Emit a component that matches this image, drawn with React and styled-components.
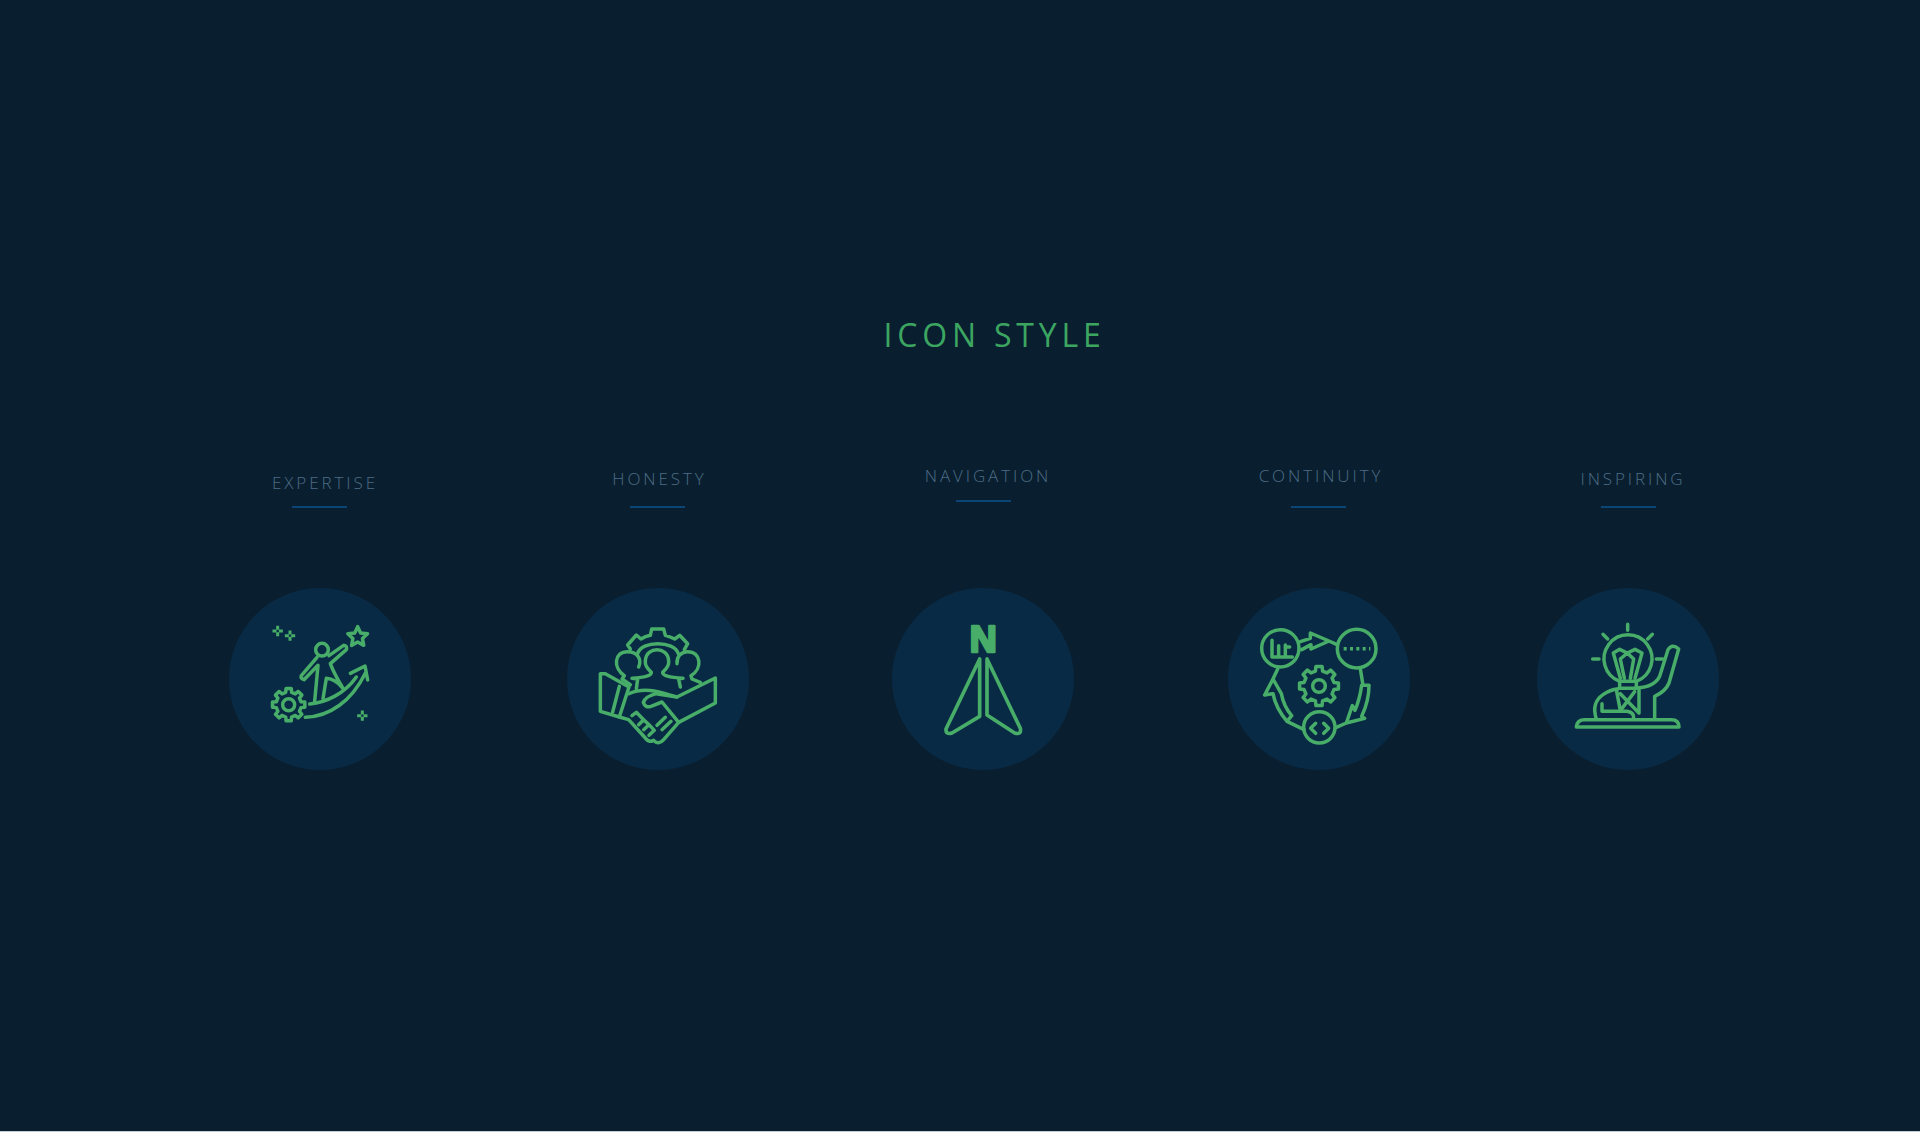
import React from 'react';
import styled, { createGlobalStyle } from 'styled-components';

const GlobalStyle = createGlobalStyle`
  html, body {
    margin: 0;
    padding: 0;
    background: #091f30;
  }
`;

// builds a cog outline around a centre point
const gearPath = (cx, cy, outer, inner, teeth) => {
  const step = (Math.PI * 2) / teeth;
  const pts = [];
  for (let i = 0; i < teeth; i++) {
    const a = i * step - Math.PI / 2;
    const w = step * 0.2;
    const pt = (r, ang) =>
      `${(cx + r * Math.cos(ang)).toFixed(1)} ${(cy + r * Math.sin(ang)).toFixed(1)}`;
    pts.push(pt(outer, a - w), pt(outer, a + w), pt(inner, a + w * 1.5), pt(inner, a + step - w * 1.5));
  }
  return `M${pts.join('L')}Z`;
};

const starPath = (cx, cy, outer, inner) => {
  const pts = [];
  for (let i = 0; i < 10; i++) {
    const r = i % 2 ? inner : outer;
    const a = (i * Math.PI) / 5 - Math.PI / 2;
    pts.push(`${(cx + r * Math.cos(a)).toFixed(1)} ${(cy + r * Math.sin(a)).toFixed(1)}`);
  }
  return `M${pts.join('L')}Z`;
};

const Sparkle = ({ x, y }) => (
  <path
    d={`M${x} ${y - 11}v3M${x} ${y + 8}v3M${x - 11} ${y}h3M${x + 8} ${y}h3`}
    strokeWidth="9"
    strokeLinecap="square"
  />
);

const IconSvg = ({ ox, children }) => (
  <Glyph viewBox="0 0 546 546">
    <g transform={`translate(${-ox},-55)`}>{children}</g>
  </Glyph>
);

const ExpertiseIcon = () => (
  <IconSvg ox={58}>
    <Sparkle x={204} y={184} />
    <Sparkle x={241} y={198} />
    <Sparkle x={458} y={438} />
    <path d={starPath(444, 202, 31, 15)} />
    <circle cx="337" cy="240" r="19" />
    <path d="M322 263L275 318Q271 326 283 330L325 287L315 395M340 387L350 326Q378 328 400 356Q372 310 362 282L410 240Q414 228 402 227L358 258" />
    <path d="M287 443C360 440 425 395 466 312M422 311L466 289L474 331" />
    <path d="M300 403C350 398 405 372 440 322" />
    <path d={gearPath(237, 405, 49, 38, 8)} />
    <circle cx="237" cy="405" r="18" />
  </IconSvg>
);

const HonestyIcon = () => (
  <IconSvg ox={50}>
    <path d="M240 238L232 226L258 196L272 208Q285 200 300 197L304 178H340L345 197Q360 201 373 208L388 197L412 222L402 240" />
    <path d="M262 252C272 212 372 212 384 252" />
    <path d="M258 358L262 328L245 326Q305 322 303 308Q283 290 285 275C285 250 305 240 320 240C335 240 355 250 355 275Q357 290 337 308Q335 322 398 326L385 328L390 352" />
    <path d="M240 345L215 328L222 318C188 296 190 246 232 246C262 246 275 270 265 292" />
    <path d="M450 338L425 328L422 318C458 296 452 246 412 246C392 246 378 262 380 282" />
    <path d="M150 312H165L236 352L207 442L150 425ZM207 350L187 427" />
    <path d="M236 372C285 350 330 368 380 382L495 325V400L385 458" />
    <path d="M380 382L318 372Q285 380 279 398Q285 416 302 410L335 397L385 458L340 510Q325 528 310 512Q295 520 285 505L235 450L207 442" />
    <path d="M245 438L258 428L280 450L265 465M280 450L296 465L280 480M296 465L312 482L296 497M320 467L345 443M335 480L362 455" />
  </IconSvg>
);

const NavigationIcon = () => (
  <IconSvg ox={35}>
    <NorthMark x="308.5" y="246" textAnchor="middle">N</NorthMark>
    <path d="M298 268V440L215 490Q196 496 197 478Z" strokeWidth="11" />
    <path d="M320 268V436L403 490Q424 496 420 476Z" strokeWidth="11" />
  </IconSvg>
);

const ContinuityIcon = () => (
  <IconSvg ox={55}>
    <circle cx="212" cy="236" r="56" />
    <circle cx="441" cy="237" r="58" />
    <circle cx="329" cy="473" r="47" />
    <path d={gearPath(328, 349, 59, 46, 8)} />
    <circle cx="328" cy="349" r="19" />
    <path d="M187 212V262H248M207 228V262M227 226V262M227 232H240" />
    <path d="M402 237H482" strokeDasharray="9 10" strokeLinecap="butt" />
    <path d="M318 461L303 476L318 491M342 461L357 476L342 491" />
    <path d="M272 216L302 206V190L358 214L304 238V225L276 240M358 214L382 225" />
    <path d="M452 297L460 347H478C478 385 468 415 456 440L465 446L410 460L428 408L436 422Q450 390 456 347M410 460L380 473" />
    <path d="M204 298L190 328L165 376L190 372Q198 415 232 455L246 438Q222 410 215 372L190 328M232 455L283 480" />
  </IconSvg>
);

const InspiringIcon = () => (
  <IconSvg ox={52}>
    <path d="M300 335A72 72 0 1 1 350 335V356H300ZM300 335H350" />
    <path d="M302 326L281 250L300 239L323 250L346 239L367 250L346 326M314 326L302 268L323 250L342 268L332 326" />
    <path d="M324 164V182M250 194L264 208M398 194L384 208M219 268H238M410 268H429" />
    <path d="M170 472Q172 450 195 450H455Q478 450 478 472Z" />
    <path d="M230 448Q214 400 250 375Q270 360 296 357" />
    <path d="M247 402V425H322Q344 428 342 448" />
    <path d="M290 360L302 423L345 366M302 372L358 430V358" />
    <path d="M352 355Q405 352 420 320L445 240Q458 220 477 238L448 340Q438 365 405 380V448" />
  </IconSvg>
);

const items = [
  { name: 'EXPERTISE', Icon: ExpertiseIcon, offset: 10, left: 0, labelGap: 12, lift: 0 },
  { name: 'HONESTY', Icon: HonestyIcon, offset: 3, left: 156, labelGap: 16, lift: 0 },
  { name: 'NAVIGATION', Icon: NavigationIcon, offset: 10, left: 143, labelGap: 13.5, lift: 6 },
  { name: 'CONTINUITY', Icon: ContinuityIcon, offset: 4, left: 154, labelGap: 19.5, lift: 0 },
  { name: 'INSPIRING', Icon: InspiringIcon, offset: 10, left: 127, labelGap: 16, lift: 0 },
];

const App = () => {
  return (
    <Page>
      <GlobalStyle />
      <Title>ICON STYLE</Title>
      <Row>
        {items.map(({ name, Icon, offset, left, labelGap, lift }) => (
          <Item key={name} $left={left}>
            <LabelBox>
              <Label $offset={offset} $gap={labelGap}>
                {name}
              </Label>
              <Rule $lift={lift} />
            </LabelBox>
            <Disc>
              <Icon />
            </Disc>
          </Item>
        ))}
      </Row>
    </Page>
  );
};

const Page = styled.div`
  box-sizing: border-box;
  height: 1132px;
  overflow: hidden;
  background: #091f30;
  border-bottom: 1px solid #c3ccd2;
  font-family: 'Open Sans', 'Liberation Sans', sans-serif;
`;

const Title = styled.h1`
  margin: 0;
  padding: 313px 0 0 0;
  width: 1989px;
  text-align: center;
  font-size: 32px;
  line-height: 44px;
  font-weight: 400;
  letter-spacing: 4.8px;
  color: #3ca661;
`;

const Row = styled.div`
  display: flex;
  padding: 0 0 0 229px;
  margin-top: 20px;
`;

const Item = styled.div`
  flex: 0 0 182px;
  width: 182px;
  margin-left: ${(p) => p.$left}px;
  display: flex;
  flex-direction: column;
  align-items: center;
`;

const LabelBox = styled.div`
  display: flex;
  flex-direction: column;
  align-items: center;
  justify-content: flex-end;
  height: 131px;
`;

const Label = styled.div`
  font-size: 17px;
  line-height: 22px;
  font-weight: 300;
  letter-spacing: 2.9px;
  white-space: nowrap;
  color: #4d6c85;
  margin-left: ${(p) => p.$offset}px;
  margin-bottom: ${(p) => p.$gap}px;
`;

const Rule = styled.div`
  flex: none;
  width: 55px;
  height: 2px;
  background: #0b4575;
  margin-bottom: ${(p) => p.$lift}px;
`;

const Disc = styled.div`
  width: 182px;
  height: 182px;
  margin-top: 80px;
  border-radius: 50%;
  background: #092a45;
`;

const Glyph = styled.svg`
  display: block;
  width: 182px;
  height: 182px;
  fill: none;
  stroke: #47ad68;
  stroke-width: 10.5;
  stroke-linejoin: round;
  stroke-linecap: round;
`;

const NorthMark = styled.text`
  font-family: 'Liberation Sans', sans-serif;
  font-weight: 700;
  font-size: 112px;
  fill: #47ad68;
  stroke: #47ad68;
  stroke-width: 8;
`;

export default App;
